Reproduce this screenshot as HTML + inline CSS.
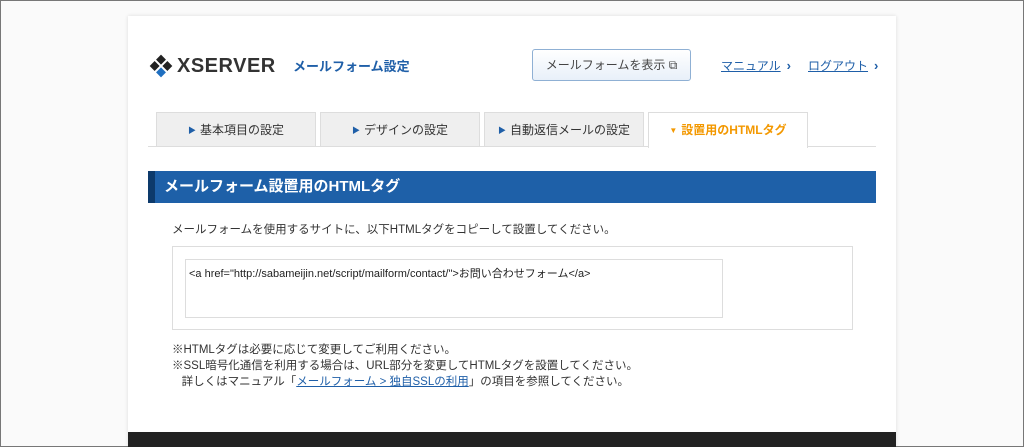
<!DOCTYPE html>
<html><head><meta charset="utf-8"><style>
*{margin:0;padding:0;box-sizing:border-box}
html,body{width:1024px;height:447px;overflow:hidden}
body{background:#fafafa;border:1px solid #777;font-family:"Liberation Sans","Noto Sans CJK JP",sans-serif;position:relative;color:#333}
.panel{position:absolute;left:127px;top:15px;width:768px;height:431px;background:#fff;box-shadow:0 0 4px rgba(0,0,0,.12)}
.abs{position:absolute}
.logo{left:20px;top:37px;font-size:20px;font-weight:bold;color:#333;display:flex;align-items:center;letter-spacing:.5px}
.title{left:165px;top:40px;font-size:13px;font-weight:bold;color:#1f5fa8}
.btn{left:404px;top:33px;width:159px;height:32px;border:1px solid #8fb0d4;border-radius:3px;background:linear-gradient(#fff,#e8f0f9);font-size:12px;color:#444;text-align:center;line-height:30px}
.lnk{top:41px;font-size:12px;color:#1f5fa8;text-decoration:underline}
.lnk b{display:inline-block;margin-left:6px;font-size:13px;color:#1f5fa8}
.tab{top:96px;width:160px;height:35px;background:#efefef;border:1px solid #ddd;border-bottom:none;font-size:12px;text-align:center;line-height:34px;color:#333}
.tab i{font-style:normal;color:#1f5fa8;font-size:8px;margin-right:4px;vertical-align:1px}
.tab.on{background:#fff;color:#f39800;font-weight:bold;height:36px}
.tab.on i{color:#f39800}
.line{left:20px;top:130px;width:728px;height:1px;background:#ddd}
.bar{left:20px;top:155px;width:728px;height:32px;background:#1e60a8;border-left:7px solid #0d3a6b;color:#fff;font-weight:bold;font-size:15px;line-height:32px;padding-left:9px}
.t{font-size:11.5px;color:#333}
.box{left:44px;top:230px;width:681px;height:84px;border:1px solid #ddd}
.ta{left:57px;top:243px;width:538px;height:59px;border:1px solid #ddd;font-size:11px;padding:5px 3px;color:#222}
.foot{left:0;top:416px;width:768px;height:15px;background:#222}
</style></head><body>
<div class="panel">
<div class="abs logo"><svg width="26" height="26" viewBox="0 0 26 26" style="margin-right:3px"><g transform="rotate(45 13 13)"><rect x="5" y="5" width="7" height="7" fill="#222"/><rect x="14" y="5" width="7" height="7" fill="#222"/><rect x="5" y="14" width="7" height="7" fill="#222"/><rect x="14" y="14" width="7" height="7" fill="#1f6fc0"/></g></svg>XSERVER</div>
<div class="abs title">メールフォーム設定</div>
<div class="abs btn">メールフォームを表示 ⧉</div>
<div class="abs lnk" style="left:593px">マニュアル<b>›</b></div>
<div class="abs lnk" style="left:680px">ログアウト<b>›</b></div>
<div class="abs tab" style="left:28px"><i>▶</i>基本項目の設定</div>
<div class="abs tab" style="left:192px"><i>▶</i>デザインの設定</div>
<div class="abs tab" style="left:356px"><i>▶</i>自動返信メールの設定</div>
<div class="abs line"></div>
<div class="abs tab on" style="left:520px"><i>▼</i>設置用のHTMLタグ</div>
<div class="abs bar">メールフォーム設置用のHTMLタグ</div>
<div class="abs t" style="left:44px;top:205px">メールフォームを使用するサイトに、以下HTMLタグをコピーして設置してください。</div>
<div class="abs box"></div>
<div class="abs ta">&lt;a href="http://sabameijin.net/script/mailform/contact/"&gt;お問い合わせフォーム&lt;/a&gt;</div>
<div class="abs t" style="left:44px;top:326px;line-height:16px">※HTMLタグは必要に応じて変更してご利用ください。<br>※SSL暗号化通信を利用する場合は、URL部分を変更してHTMLタグを設置してください。<br>&nbsp;&nbsp;&nbsp;詳しくはマニュアル「<span style="color:#1f5fa8;text-decoration:underline">メールフォーム &gt; 独自SSLの利用</span>」の項目を参照してください。</div>
<div class="abs foot"></div>
</div>
</body></html>
